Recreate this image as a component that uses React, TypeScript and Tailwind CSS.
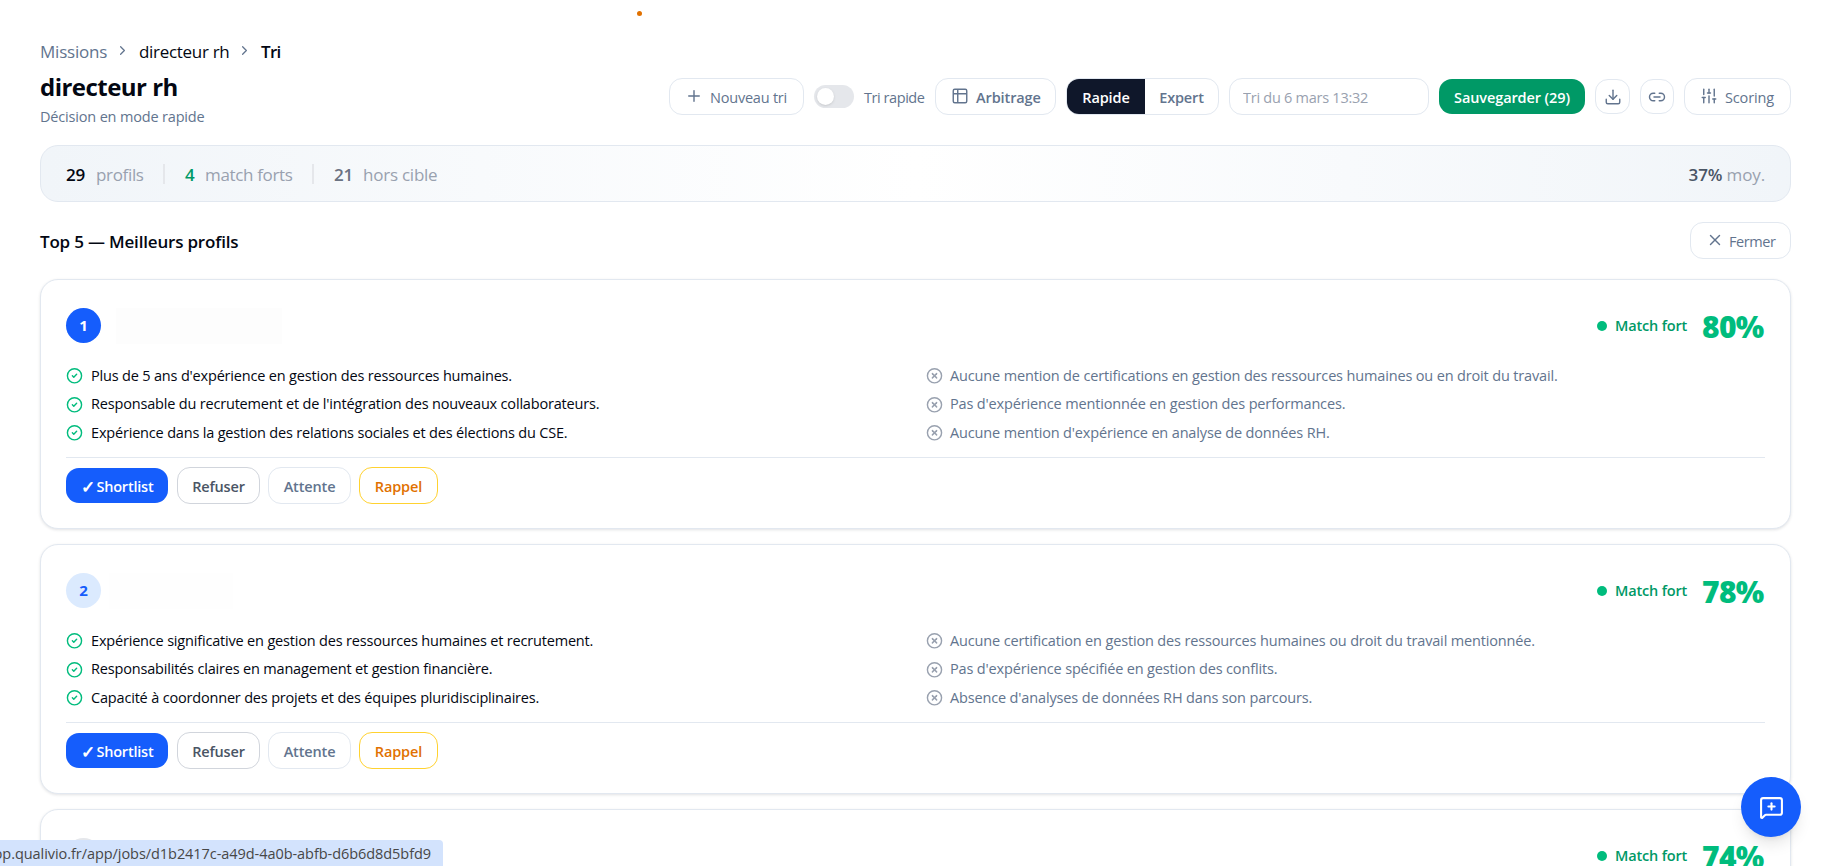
import React, { useState } from 'react';
import {
  ChevronRight,
  CircleCheck,
  CircleX,
  Download,
  Link2,
  MessageSquarePlus,
  Plus,
  SlidersVertical,
  Table2,
  X,
} from 'lucide-react';

interface Profile {
  rank: number;
  score: number;
  strengths: string[];
  gaps: string[];
}

const PROFILES: Profile[] = [
  {
    rank: 1,
    score: 80,
    strengths: [
      "Plus de 5 ans d'expérience en gestion des ressources humaines.",
      "Responsable du recrutement et de l'intégration des nouveaux collaborateurs.",
      'Expérience dans la gestion des relations sociales et des élections du CSE.',
    ],
    gaps: [
      'Aucune mention de certifications en gestion des ressources humaines ou en droit du travail.',
      "Pas d'expérience mentionnée en gestion des performances.",
      "Aucune mention d'expérience en analyse de données RH.",
    ],
  },
  {
    rank: 2,
    score: 78,
    strengths: [
      'Expérience significative en gestion des ressources humaines et recrutement.',
      'Responsabilités claires en management et gestion financière.',
      'Capacité à coordonner des projets et des équipes pluridisciplinaires.',
    ],
    gaps: [
      'Aucune certification en gestion des ressources humaines ou droit du travail mentionnée.',
      "Pas d'expérience spécifiée en gestion des conflits.",
      "Absence d'analyses de données RH dans son parcours.",
    ],
  },
  { rank: 3, score: 74, strengths: [], gaps: [] },
];

const badgeStyles: Record<number, string> = {
  1: 'bg-[#155dfc] text-white',
  2: 'bg-blue-100 text-[#155dfc]',
  3: 'bg-gray-200 text-gray-600',
};

const outlineButton =
  'flex h-[37px] shrink-0 items-center rounded-[13px] border border-slate-200 bg-white pt-0.5 text-slate-500 cursor-pointer';

const Breadcrumb: React.FC = () => (
  <nav className="flex h-6 items-center pt-px text-[17px] tracking-[-0.02em]">
    <span className="w-[75px] text-slate-500 tracking-[-0.012em]">Missions</span>
    <ChevronRight className="mr-[9px] -mt-0.5 h-[17px] w-[15px] text-slate-500" />
    <span className="w-[98px] tracking-[-0.018em]">directeur rh</span>
    <ChevronRight className="mr-[9px] -mt-0.5 h-[17px] w-[15px] text-slate-500" />
    <span className="font-semibold tracking-[-0.04em]">Tri</span>
  </nav>
);

const Toolbar: React.FC = () => {
  const [expert, setExpert] = useState(false);
  const [quick, setQuick] = useState(false);

  return (
    <div className="flex items-center text-[14.5px] tracking-[-0.01em] text-slate-500">
      <button className={`${outlineButton} mr-[10px] w-[135px] pl-[15px] tracking-[-0.015em]`}>
        <Plus className="mr-[7px] -mt-1 h-[18px] w-[18px]" strokeWidth={1.9} />
        Nouveau tri
      </button>
      <button
        onClick={() => setQuick(!quick)}
        className={`mr-[10px] flex h-[23px] w-10 items-center rounded-full px-[3px] ${
          quick ? 'justify-end bg-blue-600' : 'justify-start bg-gray-200'
        }`}
      >
        <span className="h-[17px] w-[17px] rounded-full bg-white shadow-sm" />
      </button>
      <span className="w-[71px] whitespace-nowrap pt-0.5 tracking-[-0.03em]">Tri rapide</span>
      <button className={`${outlineButton} mr-[10px] w-[121px] pl-[15px] font-semibold tracking-[-0.007em]`}>
        <Table2 className="mr-[7px] -mt-1 h-[18px] w-[18px]" strokeWidth={1.9} />
        Arbitrage
      </button>
      <div className="mr-[10px] flex h-[37px] w-[153px] overflow-hidden rounded-[13px] border border-slate-200 font-semibold">
        <button
          onClick={() => setExpert(false)}
          className={`w-[78px] pt-0.5 ${expert ? '' : 'bg-[#0f172a] text-white'}`}
        >
          Rapide
        </button>
        <button
          onClick={() => setExpert(true)}
          className={`flex-1 pt-0.5 ${expert ? 'bg-[#0f172a] text-white' : ''}`}
        >
          Expert
        </button>
      </div>
      <input
        placeholder="Tri du 6 mars 13:32"
        className="mr-[10px] h-[37px] w-[200px] rounded-[13px] border border-slate-200 px-[13px] pt-0.5 tracking-[-0.018em] placeholder:text-gray-400"
      />
      <button className="mr-[10px] h-[35px] w-[146px] rounded-[13px] bg-[#009966] pt-0.5 font-semibold tracking-[-0.007em] text-white">
        Sauvegarder (29)
      </button>
      <button className="mr-[10px] flex h-[35px] w-[35px] items-center justify-center rounded-[13px] border border-slate-200">
        <Download className="h-[18px] w-[18px]" strokeWidth={1.9} />
      </button>
      <button className="mr-[10px] flex h-[35px] w-[34px] items-center justify-center rounded-[13px] border border-slate-200">
        <Link2 className="h-[18px] w-[18px]" strokeWidth={1.9} />
      </button>
      <button className={`${outlineButton} w-[107px] pl-[15px]`}>
        <SlidersVertical className="mr-[7px] -mt-1 h-[18px] w-[18px]" strokeWidth={1.9} />
        Scoring
      </button>
    </div>
  );
};

const StatsBar: React.FC = () => (
  <div className="flex h-[57px] items-center rounded-[18px] border border-slate-200 bg-linear-to-r from-slate-100 via-white to-slate-100 px-[25px] text-[17px] tracking-[-0.02em] text-gray-400">
    <span className="w-[30px] pt-0.5 font-semibold text-gray-950">29</span>
    <span className="w-[67px] pt-0.5">profils</span>
    <span className="mr-5 h-5 w-0.5 bg-gray-200" />
    <span className="w-5 pt-0.5 font-semibold text-[#009966]">4</span>
    <span className="w-[107px] pt-0.5">match forts</span>
    <span className="mr-5 h-5 w-0.5 bg-gray-200" />
    <span className="w-[29px] pt-0.5 font-semibold text-gray-500">21</span>
    <span className="pt-0.5 tracking-[-0.014em]">hors cible</span>
    <span className="ml-auto pt-0.5 tracking-[-0.008em]">
      <b className="font-semibold text-gray-600">37%</b> moy.
    </span>
  </div>
);

const ProfileCard: React.FC<{ profile: Profile }> = ({ profile }) => (
  <article className="h-[250px] shrink-0 rounded-[18px] border border-slate-200 bg-white px-[25px] pt-7 shadow-[0_1px_3px_rgba(15,23,42,0.12)]">
    <header className="flex h-[35px] items-center">
      <span
        className={`flex h-[35px] w-[35px] items-center justify-center rounded-full text-[15px] font-bold ${badgeStyles[profile.rank]}`}
      >
        {profile.rank}
      </span>
      {/* Masked candidate name */}
      {profile.rank === 1 && <span className="ml-[15px] h-9 w-[166px] bg-[#fdfdfd]" />}
      {profile.rank === 2 && <span className="ml-2 h-9 w-[124px] bg-[#fefefe]" />}
      <span className="ml-auto mr-2 h-[10px] w-[10px] rounded-full bg-[#00bc7d]" />
      <span className="w-[87px] text-[14.5px] font-semibold tracking-[-0.012em] text-[#009966]">Match fort</span>
      <span className="w-[63px] whitespace-nowrap pt-0.5 text-[30px] font-extrabold tracking-[-0.022em] text-[#00bc7d]">
        {profile.score}%
      </span>
    </header>
    <div className="mt-[18px] grid grid-cols-[860px_1fr] pb-[11px] text-[14.5px] tracking-[-0.0125em]">
      <ul>
        {profile.strengths.map((text) => (
          <li key={text} className="flex h-[28.33px] items-center">
            <CircleCheck className="mr-2 mt-0.5 h-[17.5px] w-[17px] text-[#00bc7d]" />
            <span className="pt-[1.5px]">{text}</span>
          </li>
        ))}
      </ul>
      <ul className="tracking-[-0.0105em] text-slate-500">
        {profile.gaps.map((text) => (
          <li key={text} className="flex h-[28.33px] items-center">
            <CircleX className="mr-[7px] mt-0.5 h-[17.5px] w-[17px] text-gray-400" />
            <span className="pt-[1.5px]">{text}</span>
          </li>
        ))}
      </ul>
    </div>
    <footer className="flex items-center border-t border-slate-200 pt-[9px] text-[14.5px] font-semibold tracking-[-0.01em]">
      <button className="mr-[9px] flex h-[35px] w-[102px] items-center justify-center rounded-[13px] bg-[#155dfc] pt-0.5 text-white">
        <span className="mr-[2px] text-[17px] font-bold leading-none">✓</span>
        <span className="tracking-[-0.015em]">Shortlist</span>
      </button>
      <button className="mr-2 h-[37px] w-[83px] rounded-[13px] border border-gray-300 pt-0.5 text-gray-600">
        Refuser
      </button>
      <button className="mr-2 h-[37px] w-[83px] rounded-[13px] border border-slate-200 pt-0.5 text-slate-500">
        Attente
      </button>
      <button className="h-[37px] w-[79px] rounded-[13px] border border-[#ffd230] pt-0.5 text-[#e17100]">Rappel</button>
    </footer>
  </article>
);

export default function App() {
  return (
    <div className="relative h-screen overflow-hidden bg-white font-['Open_Sans','Noto_Sans',sans-serif] text-gray-950">
      <span className="absolute left-[637px] top-[11px] h-[5px] w-[5px] rounded-full bg-[#e17100]" />

      <main className="flex flex-col pl-[40px] pr-[37px] pt-[39px]">
        <Breadcrumb />
        <div className="flex h-[82px] justify-between">
          <div className="pt-[7px]">
            <h1 className="text-[24px] font-bold leading-[34px] tracking-[-0.022em]">directeur rh</h1>
            <p className="mt-0.5 text-[14.5px] leading-[22px] tracking-[-0.012em] text-slate-500">
              Décision en mode rapide
            </p>
          </div>
          <div className="pt-[15px]">
            <Toolbar />
          </div>
        </div>
        <StatsBar />
        <div className="mt-5 flex h-[37px] items-center justify-between">
          <h2 className="pt-0.5 text-[17px] font-semibold tracking-[-0.011em]">Top 5 — Meilleurs profils</h2>
          <button className={`${outlineButton} w-[101px] pl-[15px] text-[14.5px] tracking-[-0.03em]`}>
            <X className="mr-[5px] -mt-1 h-[18px] w-[18px]" strokeWidth={1.9} />
            Fermer
          </button>
        </div>
        <div className="mt-5 flex flex-col gap-[15px]">
          {PROFILES.map((profile) => (
            <ProfileCard key={profile.rank} profile={profile} />
          ))}
        </div>
      </main>

      {/* Feedback button */}
      <button className="absolute left-[1741px] top-[777px] flex h-[60px] w-[60px] items-center justify-center rounded-full bg-[#155dfc] text-white shadow-lg">
        <MessageSquarePlus className="h-[25px] w-[25px]" />
      </button>

      {/* Link preview */}
      <div className="absolute bottom-0 left-0 flex h-[26px] w-[443px] items-center justify-end overflow-hidden whitespace-nowrap rounded-tr bg-[#d3e3fd] pr-3 pt-0.5 text-[14.5px] tracking-[-0.004em] text-[#474747]">
        app.qualivio.fr/app/jobs/d1b2417c-a49d-4a0b-abfb-d6b6d8d5bfd9
      </div>
    </div>
  );
}
